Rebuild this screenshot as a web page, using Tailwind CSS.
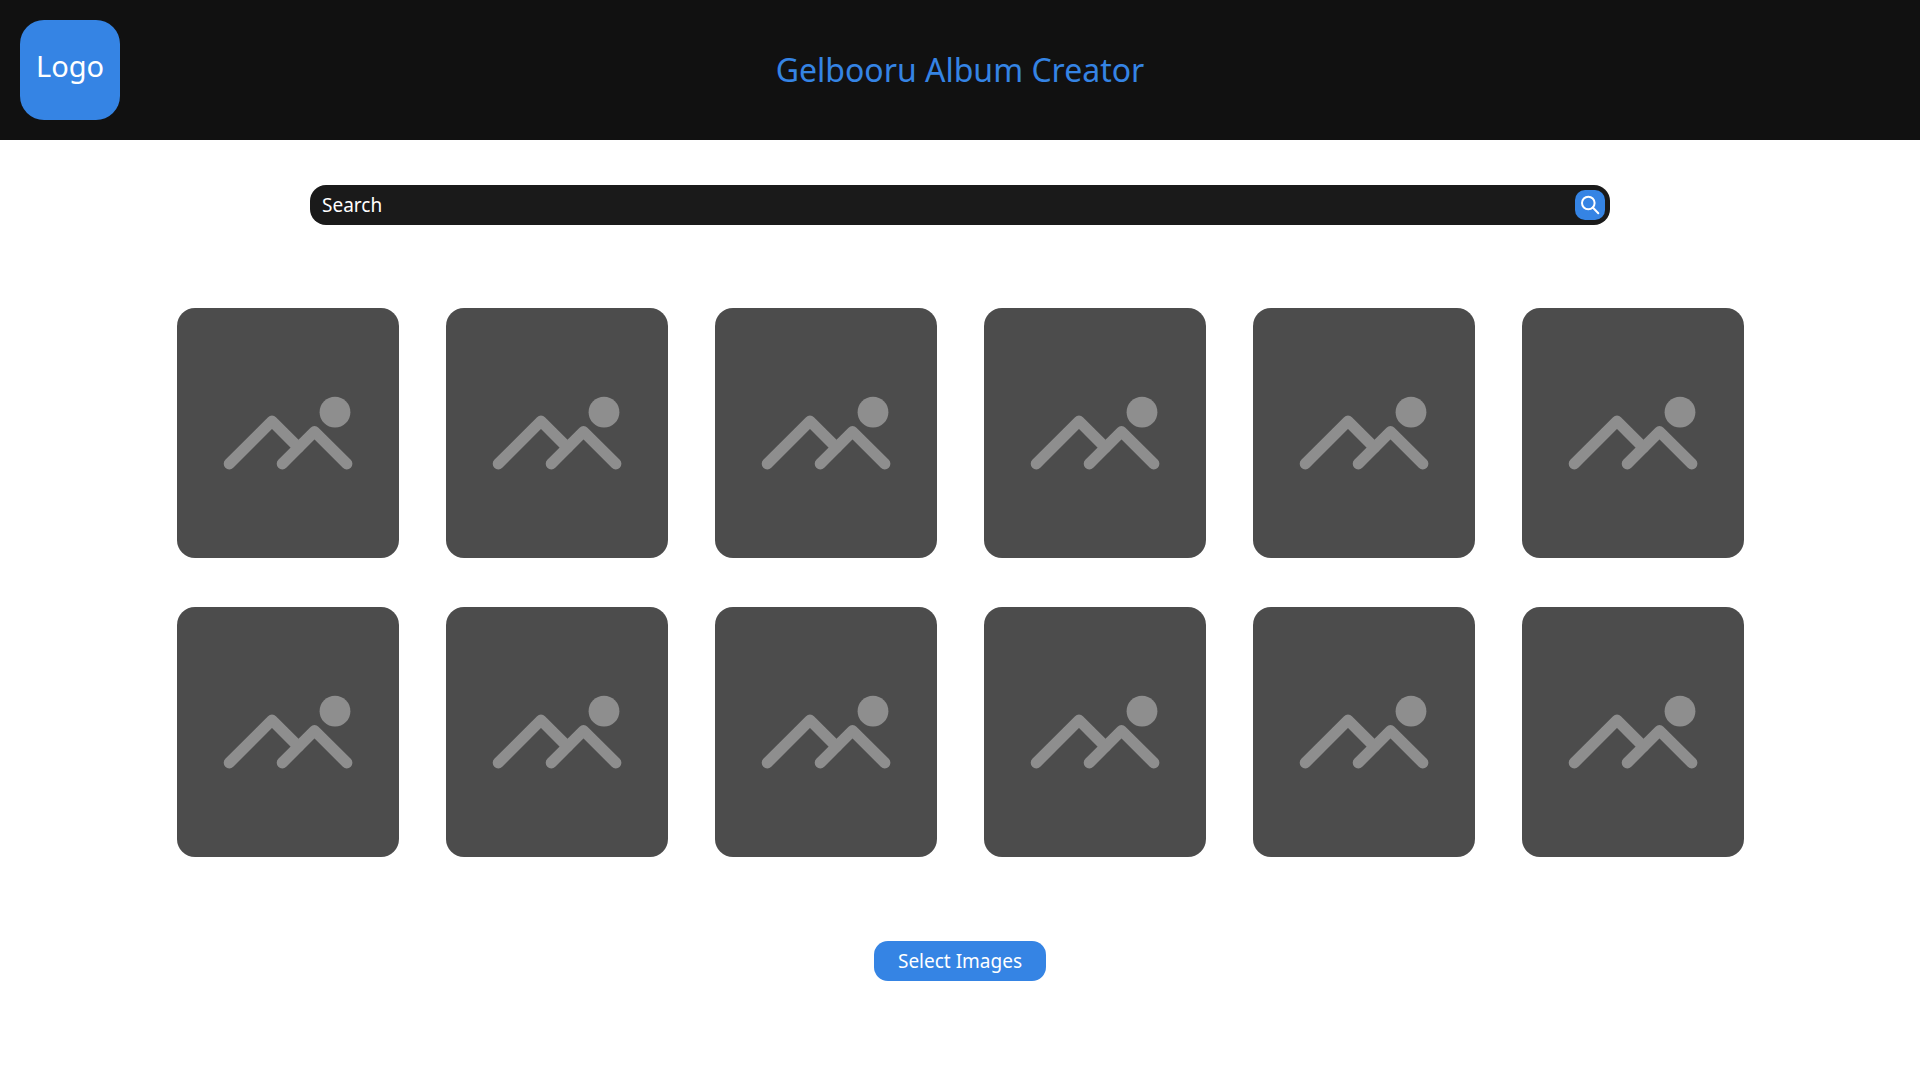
<!DOCTYPE html>
<html lang="en">
<head>
<meta charset="utf-8">
<meta name="viewport" content="width=device-width, initial-scale=1">
<title>Gelbooru Album Creator</title>
<script src="https://cdn.jsdelivr.net/npm/@tailwindcss/browser@4"></script>
</head>
<body class="min-h-screen bg-white font-['Noto_Sans',sans-serif]">
<header class="grid grid-cols-[100px_1fr_100px] items-center bg-[#111111] p-5">
  <a href="#" class="flex h-[100px] items-center justify-center rounded-3xl bg-[#3584e4] pb-2 text-[29px] text-white">Logo</a>
  <h1 class="text-center text-[32px] text-[#3584e4]">Gelbooru Album Creator</h1>
</header>
<main class="flex flex-col items-center px-5 pt-[45px] pb-12">
  <form role="search" class="flex h-10 w-full max-w-[1300px] items-center rounded-2xl bg-[#1a1a1a] pr-[5px] pl-3">
    <input type="search" aria-label="Search" placeholder="Search" class="min-w-0 flex-1 text-[19px] leading-7 text-white outline-none placeholder:text-white">
    <button type="button" aria-label="Submit search" class="flex size-[30px] items-center justify-center rounded-[10px] bg-[#3584e4]">
      <svg class="size-[30px]" viewBox="0 0 30 30" fill="none" stroke="#fff" stroke-width="2" stroke-linecap="round"><circle cx="13.3" cy="13" r="6.3"/><path d="M17.8 17.5L23.3 23.2"/></svg>
    </button>
  </form>
  <svg class="hidden">
    <symbol id="picture" viewBox="0 0 222 250">
      <g fill="none" stroke="#8e8e8e" stroke-width="11.2" stroke-linecap="round" stroke-linejoin="round">
        <path d="M52.3 155.8L95 113.1L121.4 139.5"/>
        <path d="M105.3 155.8L137.5 123.6L169.8 155.8"/>
      </g>
      <circle cx="158" cy="104.2" r="15.4" fill="#8e8e8e"/>
    </symbol>
  </svg>
  <ul class="mt-[83px] flex w-full max-w-[1568px] flex-wrap justify-center gap-x-[47px] gap-y-[49px]">
    <li class="h-[250px] w-[222px] rounded-[18px] bg-[#4c4c4c]"><svg class="size-full" role="img" aria-label="Image 1"><use href="#picture"/></svg></li>
    <li class="h-[250px] w-[222px] rounded-[18px] bg-[#4c4c4c]"><svg class="size-full" role="img" aria-label="Image 2"><use href="#picture"/></svg></li>
    <li class="h-[250px] w-[222px] rounded-[18px] bg-[#4c4c4c]"><svg class="size-full" role="img" aria-label="Image 3"><use href="#picture"/></svg></li>
    <li class="h-[250px] w-[222px] rounded-[18px] bg-[#4c4c4c]"><svg class="size-full" role="img" aria-label="Image 4"><use href="#picture"/></svg></li>
    <li class="h-[250px] w-[222px] rounded-[18px] bg-[#4c4c4c]"><svg class="size-full" role="img" aria-label="Image 5"><use href="#picture"/></svg></li>
    <li class="h-[250px] w-[222px] rounded-[18px] bg-[#4c4c4c]"><svg class="size-full" role="img" aria-label="Image 6"><use href="#picture"/></svg></li>
    <li class="h-[250px] w-[222px] rounded-[18px] bg-[#4c4c4c]"><svg class="size-full" role="img" aria-label="Image 7"><use href="#picture"/></svg></li>
    <li class="h-[250px] w-[222px] rounded-[18px] bg-[#4c4c4c]"><svg class="size-full" role="img" aria-label="Image 8"><use href="#picture"/></svg></li>
    <li class="h-[250px] w-[222px] rounded-[18px] bg-[#4c4c4c]"><svg class="size-full" role="img" aria-label="Image 9"><use href="#picture"/></svg></li>
    <li class="h-[250px] w-[222px] rounded-[18px] bg-[#4c4c4c]"><svg class="size-full" role="img" aria-label="Image 10"><use href="#picture"/></svg></li>
    <li class="h-[250px] w-[222px] rounded-[18px] bg-[#4c4c4c]"><svg class="size-full" role="img" aria-label="Image 11"><use href="#picture"/></svg></li>
    <li class="h-[250px] w-[222px] rounded-[18px] bg-[#4c4c4c]"><svg class="size-full" role="img" aria-label="Image 12"><use href="#picture"/></svg></li>
  </ul>
  <button type="button" class="mt-[84px] h-10 w-[172px] rounded-[14px] bg-[#3584e4] text-[19px] leading-7 text-white">Select Images</button>
</main>
</body>
</html>
